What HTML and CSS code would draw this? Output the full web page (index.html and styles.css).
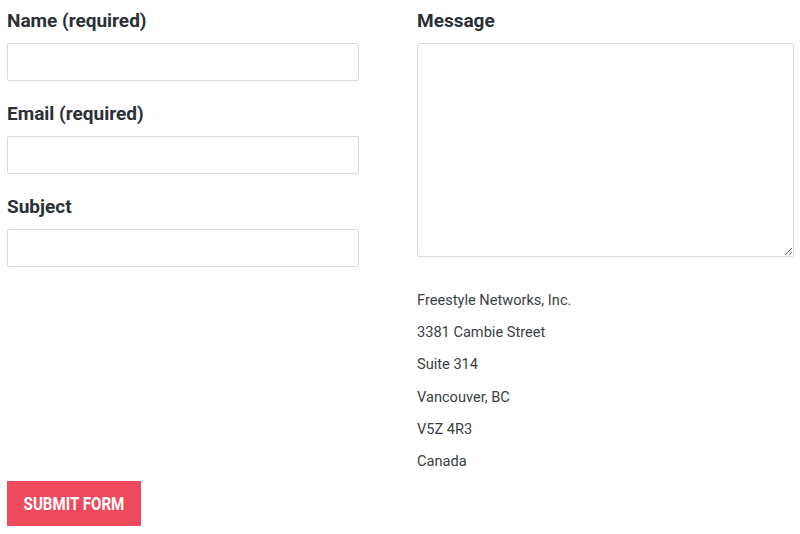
FILE: index.html
```html
<!DOCTYPE html>
<html lang="en">
<head>
    <meta charset="UTF-8">
    <meta name="viewport" content="width=device-width, initial-scale=1.0">
    <title>Contact</title>
    <link rel="stylesheet" href="styles.css">
</head>
<body>
<form class="contact-form">
    <div class="columns">
        <div class="col-left">
            <label class="field-label" for="name">Name (required)</label>
            <input class="field-input" type="text" id="name" name="name">

            <label class="field-label" for="email">Email (required)</label>
            <input class="field-input" type="email" id="email" name="email">

            <label class="field-label" for="subject">Subject</label>
            <input class="field-input" type="text" id="subject" name="subject">
        </div>

        <div class="col-right">
            <label class="field-label" for="message">Message</label>
            <textarea class="field-textarea" id="message" name="message"></textarea>

            <div class="address">
                <p>Freestyle Networks, Inc.</p>
                <p>3381 Cambie Street</p>
                <p>Suite 314</p>
                <p>Vancouver, BC</p>
                <p>V5Z 4R3</p>
                <p>Canada</p>
            </div>
        </div>
    </div>

    <button type="button" class="submit-btn"><span class="submit-text">SUBMIT FORM</span></button>
</form>
</body>
</html>
```

FILE: styles.css
```css
body {
    margin: 0;
    padding: 0;
    font-family: Roboto, 'Liberation Sans', sans-serif;
    background: #fff;
    color: #3a3f44;
}

.contact-form {
    padding: 7px 7px 0 7px;
}

.columns {
    display: grid;
    grid-template-columns: 352px 377px;
    column-gap: 58px;
}

.col-left,
.col-right {
    display: flex;
    flex-direction: column;
}

.field-label {
    display: block;
    font-size: 19px;
    font-weight: 700;
    line-height: 27px;
    color: #2a3036;
    margin-bottom: 9px;
}

.field-input {
    box-sizing: border-box;
    width: 100%;
    height: 38px;
    border: 1px solid #d9d9d9;
    border-radius: 2px;
    background: #fff;
    margin: 0 0 19px 0;
    padding: 0 10px;
    font-family: inherit;
    font-size: 15px;
}

.field-textarea {
    box-sizing: border-box;
    width: 100%;
    height: 214px;
    border: 1px solid #d9d9d9;
    border-radius: 2px;
    background: #fff;
    margin: 0;
    padding: 10px;
    font-family: inherit;
    font-size: 15px;
}

.address {
    margin-top: 27px;
}

.address p {
    margin: 0;
    font-size: 14.6px;
    line-height: 32.2px;
    color: #3b3f44;
}

.submit-btn {
    display: flex;
    justify-content: center;
    align-items: center;
    margin-top: 4px;
    width: 134px;
    height: 45px;
    border: none;
    border-radius: 0;
    background-color: #ef4a5c;
    color: #fff;
    font-family: Roboto, sans-serif;
    font-size: 18px;
    font-weight: 700;
    padding: 0;
    cursor: pointer;
}

.submit-text {
    display: inline-block;
    white-space: nowrap;
    transform: scaleX(0.84);
}
```
